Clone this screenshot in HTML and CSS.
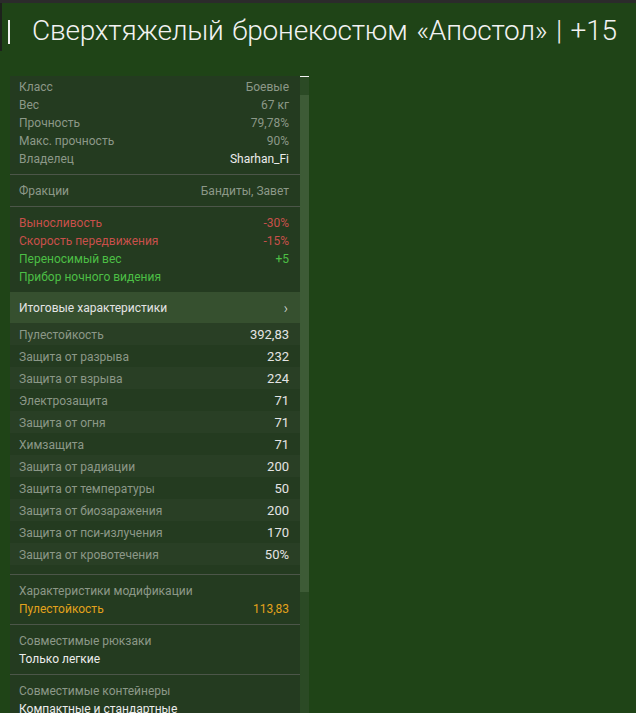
FILE: index.html
```html
<!DOCTYPE html>
<html lang="ru">
<head>
    <meta charset="UTF-8">
    <title>Сверхтяжелый бронекостюм «Апостол»</title>
    <link rel="stylesheet" href="styles.css">
</head>
<body>
    <header class="title-bar">
        <span class="title-mark"></span>
        <h1 class="title">Сверхтяжелый бронекостюм «Апостол» | +15</h1>
    </header>

    <div class="wrap">
        <div class="panel">
            <div class="sec sec-first">
                <div class="row"><span>Класс</span><span>Боевые</span></div>
                <div class="row"><span>Вес</span><span>67 кг</span></div>
                <div class="row"><span>Прочность</span><span>79,78%</span></div>
                <div class="row"><span>Макс. прочность</span><span>90%</span></div>
                <div class="row"><span>Владелец</span><span class="white">Sharhan_Fi</span></div>
            </div>
            <div class="sec">
                <div class="row"><span>Фракции</span><span>Бандиты, Завет</span></div>
            </div>
            <div class="sec sec-open">
                <div class="row red"><span>Выносливость</span><span>-30%</span></div>
                <div class="row red"><span>Скорость передвижения</span><span>-15%</span></div>
                <div class="row green"><span>Переносимый вес</span><span>+5</span></div>
                <div class="row green"><span>Прибор ночного видения</span></div>
            </div>

            <div class="total-head">
                <span>Итоговые характеристики</span>
                <span class="chev">›</span>
            </div>
            <div class="sec stats">
                <div class="stat"><span>Пулестойкость</span><span>392,83</span></div>
                <div class="stat"><span>Защита от разрыва</span><span>232</span></div>
                <div class="stat"><span>Защита от взрыва</span><span>224</span></div>
                <div class="stat"><span>Электрозащита</span><span>71</span></div>
                <div class="stat"><span>Защита от огня</span><span>71</span></div>
                <div class="stat"><span>Химзащита</span><span>71</span></div>
                <div class="stat"><span>Защита от радиации</span><span>200</span></div>
                <div class="stat"><span>Защита от температуры</span><span>50</span></div>
                <div class="stat"><span>Защита от биозаражения</span><span>200</span></div>
                <div class="stat"><span>Защита от пси-излучения</span><span>170</span></div>
                <div class="stat"><span>Защита от кровотечения</span><span>50%</span></div>
            </div>

            <div class="sec">
                <div class="row"><span>Характеристики модификации</span></div>
                <div class="row orange"><span>Пулестойкость</span><span>113,83</span></div>
            </div>
            <div class="sec">
                <div class="row"><span>Совместимые рюкзаки</span></div>
                <div class="row white"><span>Только легкие</span></div>
            </div>
            <div class="sec">
                <div class="row"><span>Совместимые контейнеры</span></div>
                <div class="row white"><span>Компактные и стандартные</span></div>
            </div>
        </div>
        <div class="scroll">
            <div class="scroll-thumb"></div>
        </div>
    </div>
</body>
</html>
```

FILE: styles.css
```css
body {
    margin: 0;
    padding: 0;
    background-color: #1f4417;
    border-top: 3px solid #2b2b2b;
    font-family: Roboto, "Noto Sans", sans-serif;
    overflow: hidden;
}
.title-bar {
    display: flex;
    align-items: center;
    height: 42px;
    padding-top: 6px;
    border-left: 2px solid #1d221c;
    padding-left: 6px;
}
.title-mark {
    width: 2px;
    height: 24px;
    background: #f0f0f0;
    margin-right: 22px;
    margin-top: 4px;
}
.title {
    margin: 0;
    font-weight: 300;
    font-size: 28px;
    letter-spacing: -0.2px;
    word-spacing: 2px;
    color: #f2f2f2;
    white-space: nowrap;
}
.wrap {
    display: flex;
    margin-top: 25px;
    margin-left: 10px;
}
.panel {
    width: 290px;
    background-color: #243b20;
    font-size: 12px;
    color: #8c9888;
}
.sec {
    padding: 6px 11px 7px 9px;
    border-bottom: 1px solid #4c5649;
}
.sec-first {
    padding-top: 1px;
}
.sec-open {
    border-bottom: none;
}
.row {
    display: flex;
    justify-content: space-between;
    height: 18px;
    padding-top: 2px;
    line-height: 16px;
    box-sizing: border-box;
}
.white {
    color: #ececec;
}
.red {
    color: #c8504b;
}
.green {
    color: #4cbf45;
}
.orange {
    color: #e2a21c;
}
.total-head {
    display: flex;
    justify-content: space-between;
    align-items: center;
    height: 31px;
    padding: 1px 12px 0 9px;
    box-sizing: border-box;
    background-color: #36502f;
    color: #e4e4e4;
}
.chev {
    font-size: 14px;
    font-weight: 300;
}
.stats {
    padding: 0 0 9px 0;
}
.stat {
    display: flex;
    justify-content: space-between;
    height: 22px;
    padding: 2px 11px 0 9px;
    line-height: 20px;
    box-sizing: border-box;
}
.stat span:last-child {
    color: #e4e4e4;
    font-size: 13px;
}
.stat:nth-child(odd) {
    background-color: rgba(255, 255, 255, 0.025);
}
.scroll {
    width: 9px;
    border-top: 1px solid #f4f4f4;
    background-color: #2b4a25;
    padding-top: 18px;
}
.scroll-thumb {
    height: 497px;
    background-color: #3d5b36;
}
```
